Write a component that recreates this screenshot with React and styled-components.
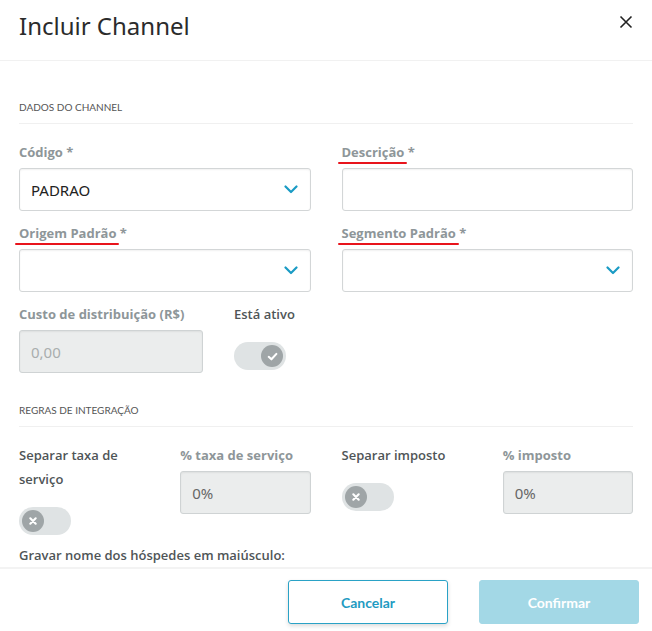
import React from "react";
import styled, { createGlobalStyle } from "styled-components";

const Global = createGlobalStyle`
  html, body { margin: 0; padding: 0; background: #fff; }
  body { font-family: Lato, "Noto Sans", sans-serif; }
  * { box-sizing: border-box; }
`;

const Modal = styled.div`
  width: 652px;
  height: 631px;
  display: flex;
  flex-direction: column;
  background: #fff;
  overflow: hidden;
`;

const Header = styled.header`
  height: 61px;
  flex: none;
  display: flex;
  justify-content: space-between;
  align-items: flex-start;
  padding: 10px 14px 0 19px;
  border-bottom: 1px solid #f1f1f1;
`;

const Title = styled.h1`
  margin: 0;
  font-family: "Noto Sans", "Open Sans", sans-serif;
  font-weight: 400;
  font-size: 24px;
  line-height: 32px;
  color: #2b2b2b;
`;

const Close = styled.button`
  border: 0;
  background: none;
  padding: 0;
  width: 24px;
  height: 24px;
  display: flex;
  align-items: center;
  justify-content: center;
  cursor: pointer;
`;

const Body = styled.div`
  flex: 1;
  overflow: hidden;
  padding: 38px 19px 0;
`;

const SectionTitle = styled.div`
  height: 25px;
  font-size: 10px;
  line-height: 16px;
  color: #555;
  text-transform: uppercase;
  border-bottom: 1px solid #f0f0f0;
  margin-bottom: 16px;
  margin-top: ${(p) => p.$top || 0}px;
`;

const Grid = styled.div`
  display: grid;
  grid-template-columns: ${(p) => p.$cols};
  column-gap: 31px;
  row-gap: 10px;
  align-items: start;
  margin-top: ${(p) => p.$top || 0}px;
`;

const Field = styled.div`
  display: flex;
  flex-direction: column;
`;

const Label = styled.label`
  font-family: "Open Sans", Lato, sans-serif;
  font-size: 13px;
  font-weight: ${(p) => (p.$dark ? 600 : 700)};
  line-height: 24px;
  margin-bottom: 4px;
  white-space: normal;
  color: ${(p) => (p.$dark ? "#4f5557" : "#8e9699")};
`;

const Marked = styled.span`
  position: relative;
  &::after {
    content: "";
    position: absolute;
    left: -4px;
    right: -3px;
    bottom: -3px;
    height: 2px;
    border-radius: 1px;
    background: #e8141c;
  }
`;

const Box = styled.div`
  height: 43px;
  border: 1px solid ${(p) => (p.$disabled ? "#cfd3d4" : "#d3d6d7")};
  border-radius: 3px;
  background: ${(p) => (p.$disabled ? "#ebeded" : "#fff")};
  box-shadow: inset 0 1px 2px rgba(0, 0, 0, 0.06);
  display: flex;
  align-items: center;
  justify-content: space-between;
  padding: 0 12px 0 11px;
  font-size: 15px;
  color: ${(p) => p.$color || "#222"};
  font-family: "Noto Sans", "Open Sans", sans-serif;
`;

const Toggle = styled.div`
  margin-top: 12px;
  width: 52px;
  height: 28px;
  border-radius: 14px;
  background: #dfe3e4;
  display: flex;
  align-items: center;
  justify-content: ${(p) => (p.$on ? "flex-end" : "flex-start")};
  padding: 0 3px;
`;

const Knob = styled.span`
  width: 22px;
  height: 22px;
  border-radius: 50%;
  background: #9fa5a7;
  display: flex;
  align-items: center;
  justify-content: center;
`;

const Note = styled.div`
  margin-top: 8px;
  font-family: "Open Sans", Lato, sans-serif;
  font-size: 13px;
  font-weight: 600;
  line-height: 24px;
  color: #4f5557;
`;

const Footer = styled.footer`
  flex: none;
  height: 64px;
  border-top: 2px solid #f3f3f3;
  display: flex;
  justify-content: flex-end;
  align-items: flex-start;
  gap: 31px;
  padding: 11px 13px 0 0;
`;

const Button = styled.button`
  width: 160px;
  height: 44px;
  border-radius: 3px;
  font-family: Lato, sans-serif;
  font-size: 14px;
  font-weight: 700;
  cursor: pointer;
  border: 1px solid ${(p) => (p.$primary ? "#a3d8e6" : "#2aa2c6")};
  background: ${(p) => (p.$primary ? "#a3d8e6" : "#fff")};
  color: ${(p) => (p.$primary ? "#fff" : "#1f9bc2")};
  box-shadow: ${(p) => (p.$primary ? "none" : "0 2px 4px rgba(0,0,0,0.14)")};
`;

const Chevron = () => (
  <svg width="14" height="9" viewBox="0 0 14 9">
    <path d="M1.5 1.5 L7 7 L12.5 1.5" fill="none" stroke="#1a9bc4" strokeWidth="2.2" strokeLinecap="round" strokeLinejoin="round" />
  </svg>
);

const Check = () => (
  <svg width="13" height="13" viewBox="0 0 12 12">
    <path d="M2.5 6.3 L5 8.6 L9.6 3.6" fill="none" stroke="#fff" strokeWidth="1.9" strokeLinecap="round" strokeLinejoin="round" />
  </svg>
);

const Cross = () => (
  <svg width="12" height="12" viewBox="0 0 12 12">
    <path d="M3.3 3.3 L8.7 8.7 M8.7 3.3 L3.3 8.7" fill="none" stroke="#fff" strokeWidth="2.1" strokeLinecap="round" />
  </svg>
);

const Switch = ({ on }) => (
  <Toggle $on={on}>
    <Knob>{on ? <Check /> : <Cross />}</Knob>
  </Toggle>
);

export default function App() {
  return (
    <>
      <Global />
      <Modal>
        <Header>
          <Title>Incluir Channel</Title>
          <Close aria-label="Fechar">
            <svg width="14" height="14" viewBox="0 0 14 14">
              <path d="M1.5 1.5 L12.5 12.5 M12.5 1.5 L1.5 12.5" stroke="#222" strokeWidth="1.6" />
            </svg>
          </Close>
        </Header>

        <Body>
          <SectionTitle>Dados do Channel</SectionTitle>
          <Grid $cols="1fr 1fr">
            <Field>
              <Label>Código *</Label>
              <Box>
                PADRAO
                <Chevron />
              </Box>
            </Field>
            <Field>
              <Label>
                <Marked>Descrição</Marked> *
              </Label>
              <Box />
            </Field>
            <Field>
              <Label>
                <Marked>Origem Padrão</Marked> *
              </Label>
              <Box>
                <span />
                <Chevron />
              </Box>
            </Field>
            <Field>
              <Label>
                <Marked>Segmento Padrão</Marked> *
              </Label>
              <Box>
                <span />
                <Chevron />
              </Box>
            </Field>
          </Grid>

          <Grid $cols="184px 1fr" $top={10}>
            <Field>
              <Label>Custo de distribuição (R$)</Label>
              <Box $disabled $color="#a9adae">0,00</Box>
            </Field>
            <Field>
              <Label $dark>Está ativo</Label>
              <Switch on />
            </Field>
          </Grid>

          <SectionTitle $top={29}>Regras de integração</SectionTitle>
          <Grid $cols="repeat(4, 1fr)">
            <Field>
              <Label $dark>Separar taxa de serviço</Label>
              <Switch />
            </Field>
            <Field>
              <Label>% taxa de serviço</Label>
              <Box $disabled $color="#666">0%</Box>
            </Field>
            <Field>
              <Label $dark>Separar imposto</Label>
              <Switch />
            </Field>
            <Field>
              <Label>% imposto</Label>
              <Box $disabled $color="#666">0%</Box>
            </Field>
          </Grid>
          <Note>Gravar nome dos hóspedes em maiúsculo:</Note>
        </Body>

        <Footer>
          <Button>Cancelar</Button>
          <Button $primary>Confirmar</Button>
        </Footer>
      </Modal>
    </>
  );
}
